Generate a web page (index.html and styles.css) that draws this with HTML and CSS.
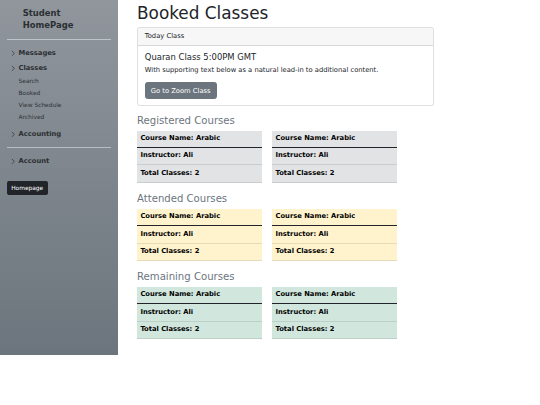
FILE: index.html
```html
<!DOCTYPE html>
<html lang="en">
<head>
<meta charset="utf-8">
<title>Booked Classes</title>
<link rel="stylesheet" href="styles.css">
</head>
<body>
<div class="layout">
  <aside class="sidebar">
    <div class="brand">Student<br>HomePage</div>
    <hr class="divider">
    <ul class="nav">
      <li class="nav-item"><span class="chev"><svg viewBox="0 0 10 16" width="4.2" height="6.75"><path d="M2 2l6 6-6 6" fill="none" stroke="currentColor" stroke-width="1.6"/></svg></span>Messages</li>
      <li class="nav-item"><span class="chev"><svg viewBox="0 0 10 16" width="4.2" height="6.75"><path d="M2 2l6 6-6 6" fill="none" stroke="currentColor" stroke-width="1.6"/></svg></span>Classes</li>
      <li class="sub">
        <ul class="subnav">
          <li>Search</li>
          <li>Booked</li>
          <li>View Schedule</li>
          <li>Archived</li>
        </ul>
      </li>
      <li class="nav-item"><span class="chev"><svg viewBox="0 0 10 16" width="4.2" height="6.75"><path d="M2 2l6 6-6 6" fill="none" stroke="currentColor" stroke-width="1.6"/></svg></span>Accounting</li>
    </ul>
    <hr class="divider divider-second">
    <ul class="nav">
      <li class="nav-item"><span class="chev"><svg viewBox="0 0 10 16" width="4.2" height="6.75"><path d="M2 2l6 6-6 6" fill="none" stroke="currentColor" stroke-width="1.6"/></svg></span>Account</li>
    </ul>
    <button class="btn-dark">Homepage</button>
  </aside>
  <main class="main">
    <h1 class="title">Booked Classes</h1>
    <div class="card">
      <div class="card-header">Today Class</div>
      <div class="card-body">
        <h5 class="card-title">Quaran Class 5:00PM GMT</h5>
        <p class="card-text">With supporting text below as a natural lead-in to additional content.</p>
        <button class="btn-secondary">Go to Zoom Class</button>
      </div>
    </div>

    <h4 class="section">Registered Courses</h4>
    <div class="row">
      <table class="tbl tbl-secondary">
        <thead><tr><th>Course Name: Arabic</th></tr></thead>
        <tbody><tr><th>Instructor: Ali</th></tr><tr><th>Total Classes: 2</th></tr></tbody>
      </table>
      <table class="tbl tbl-secondary">
        <thead><tr><th>Course Name: Arabic</th></tr></thead>
        <tbody><tr><th>Instructor: Ali</th></tr><tr><th>Total Classes: 2</th></tr></tbody>
      </table>
    </div>

    <h4 class="section">Attended Courses</h4>
    <div class="row">
      <table class="tbl tbl-warning">
        <thead><tr><th>Course Name: Arabic</th></tr></thead>
        <tbody><tr><th>Instructor: Ali</th></tr><tr><th>Total Classes: 2</th></tr></tbody>
      </table>
      <table class="tbl tbl-warning">
        <thead><tr><th>Course Name: Arabic</th></tr></thead>
        <tbody><tr><th>Instructor: Ali</th></tr><tr><th>Total Classes: 2</th></tr></tbody>
      </table>
    </div>

    <h4 class="section">Remaining Courses</h4>
    <div class="row">
      <table class="tbl tbl-success">
        <thead><tr><th>Course Name: Arabic</th></tr></thead>
        <tbody><tr><th>Instructor: Ali</th></tr><tr><th>Total Classes: 2</th></tr></tbody>
      </table>
      <table class="tbl tbl-success">
        <thead><tr><th>Course Name: Arabic</th></tr></thead>
        <tbody><tr><th>Instructor: Ali</th></tr><tr><th>Total Classes: 2</th></tr></tbody>
      </table>
    </div>
  </main>
</div>
</body>
</html>
```

FILE: styles.css
```css
body {
  margin: 0;
  font-family: "DejaVu Sans", sans-serif;
  font-size: 6.75px;
  line-height: 1.5;
  color: #212529;
  background: #fff;
}
.layout {
  display: flex;
  align-items: stretch;
}
.sidebar {
  width: 118px;
  flex: 0 0 118px;
  background: linear-gradient(to bottom, #90969c, #6c757d);
  padding: 6.75px 6.75px 0 6.75px;
  box-sizing: border-box;
}
.brand {
  font-size: 8.44px;
  font-weight: bold;
  line-height: 1.5;
  color: #2b2f33;
  padding-left: 16px;
}
.divider {
  border: 0;
  border-top: 1px solid rgba(255, 255, 255, 0.45);
  margin: 6.5px 0 5.8px;
}
.divider-second {
  margin-top: 5.5px;
}
.nav {
  list-style: none;
  margin: 0;
  padding: 0;
}
.nav-item {
  display: flex;
  align-items: center;
  font-weight: bold;
  color: #2b2f33;
  padding: 2.53px 0;
  line-height: 10.125px;
}
.chev {
  display: inline-flex;
  width: 7.2px;
  margin-left: 4.6px;
  color: #2b2f33;
}
.subnav {
  list-style: none;
  margin: -0.5px 0 0;
  padding: 0 0 3.2px 11.8px;
  font-size: 5.9px;
  color: #2f3438;
}
.subnav li {
  line-height: 12px;
}
.btn-dark {
  display: inline-block;
  margin-top: 12.2px;
  font-family: inherit;
  font-size: 5.9px;
  line-height: 1.5;
  padding: 1.69px 3.375px;
  color: #fff;
  background: #212529;
  border: 1px solid #212529;
  border-radius: 1.69px;
}
.main {
  padding: 2.53px 0 9.25px 19px;
  flex: 1;
}
.title {
  font-size: 16.875px;
  font-weight: 500;
  line-height: 1.2;
  margin: 0 0 4.2px;
  color: #212529;
}
.card {
  width: 295.3px;
  border: 1px solid rgba(0, 0, 0, 0.125);
  border-radius: 2.53px;
  margin-bottom: 8.75px;
  overflow: hidden;
}
.card-header {
  padding: 3.375px 6.75px;
  background: rgba(0, 0, 0, 0.03);
  border-bottom: 1px solid rgba(0, 0, 0, 0.125);
}
.card-body {
  padding: 6px 6.75px 5.5px;
}
.card-title {
  font-size: 8.44px;
  font-weight: 500;
  line-height: 1.2;
  margin: 0 0 3.375px;
}
.card-text {
  margin: 0 0 6.75px;
}
.btn-secondary {
  font-family: inherit;
  font-size: 6.75px;
  line-height: 1.5;
  padding: 2.53px 5.06px;
  color: #fff;
  background: #6c757d;
  border: 1px solid #6c757d;
  border-radius: 2.53px;
}
.section {
  font-size: 10.125px;
  font-weight: 500;
  line-height: 1.2;
  color: #6c757d;
  margin: 3.375px 0 4px;
}
.row {
  display: flex;
  gap: 10.125px;
}
.tbl {
  width: 125px;
  border-collapse: collapse;
  margin-bottom: 6.6px;
  color: #000;
}
.tbl th {
  text-align: left;
  padding: 3.375px;
  font-weight: bold;
  line-height: 9.6px;
  border-bottom: 1px solid var(--bc);
  background: var(--bg);
}
.tbl thead th {
  border-bottom: 1px solid #212529;
}
.tbl-secondary { --bg: #e2e3e5; --bc: #cbccce; }
.tbl-warning { --bg: #fff3cd; --bc: #e6dbb9; }
.tbl-success { --bg: #d1e7dd; --bc: #bcd0c7; }
```
